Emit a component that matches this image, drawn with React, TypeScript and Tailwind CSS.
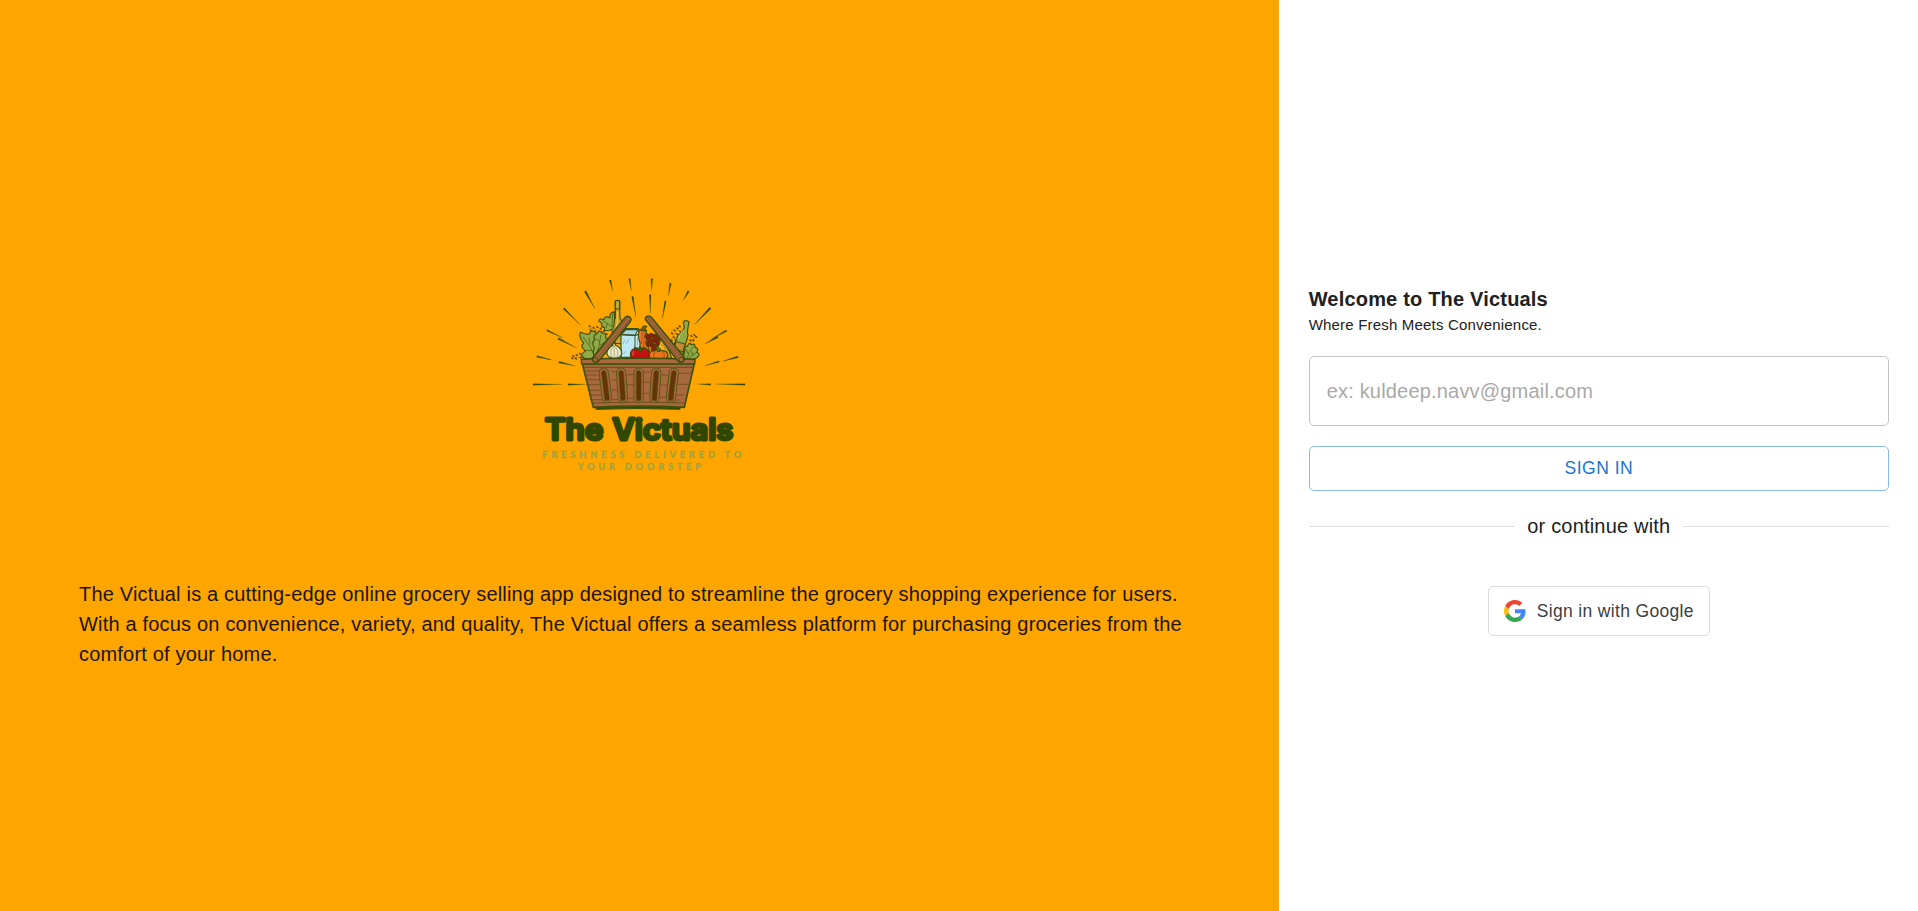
const rays = [
  'M268 45 L273 45 L278 77Z', 'M326 41 L331 41 L334 76Z', 'M393 41 L398 41 L395 76Z',
  'M449 54 L454 56 L445 92Z', 'M503 77 L508 80 L490 106Z', 'M193 80 L198 77 L225 131Z',
  'M335 95 L340 94 L348 157Z', 'M388 89 L393 89 L391 145Z', 'M434 108 L439 109 L427 161Z',
  'M129 131 L133 128 L181 180Z', 'M569 127 L573 131 L523 179Z',
  'M80 198 L82 194 L129 219Z', 'M113 223 L116 218 L170 249Z',
  'M618 195 L621 199 L574 222Z', 'M592 213 L595 218 L554 237Z',
  'M50 277 L51 272 L98 285Z', 'M116 294 L118 289 L166 303Z',
  'M653 273 L655 278 L608 289Z', 'M597 287 L598 292 L555 302Z',
  'M39 356 L126 358 L39 361Z', 'M195 358 L144 356 L144 361Z',
  'M533 357 L572 356 L572 361Z', 'M588 357 L675 356 L675 361Z',
];

const slots = [
  { x: 256, tilt: -7 }, { x: 306, tilt: -4 }, { x: 356, tilt: 0 }, { x: 406, tilt: 4 }, { x: 457, tilt: 7 },
];

const planks = [
  'M190 318H240', 'M193 330H232', 'M197 344H240', 'M198 359H240', 'M204 376H242', 'M207 390H246', 'M210 404H248',
  'M276 320H290', 'M276 345H294', 'M277 375H296', 'M278 404H298', 'M322 329H342', 'M322 359H342', 'M322 400H342',
  'M370 321H390', 'M370 352H389', 'M370 385H388', 'M420 330H444', 'M420 360H440', 'M420 397H438',
  'M474 325H510', 'M474 358H505', 'M470 390H490', 'M468 405H480',
];

const seeds = [
  [209, 184], [221, 188], [232, 186], [242, 191], [251, 199], [212, 196], [225, 199], [238, 204], [250, 210], [260, 207],
  [160, 273], [170, 270], [168, 281], [180, 266], [182, 278], [157, 280],
  [456, 205], [463, 196], [472, 190], [479, 184], [462, 217], [471, 207], [480, 199], [455, 226], [467, 225],
  [514, 213], [523, 210], [529, 216], [511, 226], [520, 226], [509, 236],
];

const grapes = [
  [382, 214], [394, 212], [407, 214], [416, 220], [389, 226], [402, 227], [413, 233], [395, 240], [407, 244], [385, 238], [400, 254],
];

function Logo() {
  return (
    <svg className="ml-[2px] block h-[220px] w-[240px]" viewBox="0 0 720 660" role="img" aria-label="The Victuals">
      <g fill="#2f4a05" stroke="#2f4a05" strokeWidth="0.6">{rays.map((d) => <path key={d} d={d} />)}</g>
      <g strokeLinejoin="round" strokeLinecap="round" stroke="#3c500b" strokeWidth="3.5">
        <g fill="#604a08" stroke="none">
          {seeds.map(([x, y]) => <ellipse key={`${x}-${y}`} cx={x} cy={y} rx="4" ry="2.5" transform={`rotate(30 ${x} ${y})`} />)}
        </g>
        <path fill="none" strokeWidth="1" d="M210 190 Q240 190 264 218 M158 278 L188 276 M452 234 Q457 207 480 185 M508 240 L528 210" />
        <path fill="#d2a226" d="M286 132 L286 109 Q292 104 299 109 L299 132 L300 159 Q314 180 309 207 L304 236 L286 235 L276 200 Q273 180 286 159Z" />
        <path fill="#b9ab38" d="M286 108 Q292 104 299 108 L299 132 L286 132Z" />
        <path fill="none" stroke="#ead06d" strokeWidth="3" d="M292 141 V170 Q286 190 292 214" />
        <path fill="#91aa48" d="M283 140 Q267 145 270 158 Q253 151 252 164 Q237 158 237 169 Q249 175 245 186 Q257 184 253 197 Q269 198 278 192 Q286 176 283 140Z" />
        <path fill="none" strokeWidth="2" d="M249 167 L276 185 L278 148 M262 177 L258 188" />
        <path fill="#91aa48" d="M217 279 Q186 286 184 268 L197 257 Q178 246 191 234 Q175 217 181 202 Q198 209 207 208 Q212 193 227 201 Q232 213 235 225 L232 278Z" />
        <path fill="#91aa48" d="M232 205 Q238 192 247 205 Q259 203 257 218 Q272 228 261 242 Q263 259 244 267 L226 278 Q216 265 223 249 Q213 230 224 225 Q217 209 232 205Z" />
        <path fill="none" strokeWidth="2" d="M189 216 Q211 240 225 275 M198 256 L216 257 M207 219 L211 238 M242 211 Q240 241 231 262 M227 221 L238 229 M256 231 L240 240" />
        <path fill="#bfe7f3" d="M303 209 L316 191 L355 191 L362 205 L361 277 L303 277Z" />
        <path fill="#a5d7e8" d="M303 209 L318 194 L351 194 L362 207 L344 211Z" />
        <path fill="none" strokeWidth="3" d="M316 191 H355 M304 209 L345 211 L353 195 M345 211 V277" />
        <path fill="none" stroke="#799c9d" strokeWidth="2" d="M314 226 L309 236 M327 222 L320 235 M316 260 L311 267 M353 218 V239 M353 254 V272" />
        <path fill="#e9792a" d="M359 194 Q371 190 378 200 Q386 217 377 232 Q392 249 388 280 L361 280 L360 233 Q351 209 359 194Z" />
        <path fill="none" stroke="#963d0a" strokeWidth="2" d="M366 197 Q369 216 364 236 M373 201 Q374 220 370 248" />
        <path fill="#b64f16" d="M363 196 L370 183 L380 184 L374 192 L380 197Z" />
        <g fill="#8b210e" stroke="#5d3208" strokeWidth="3">{grapes.map(([x, y]) => <circle key={`${x}-${y}`} cx={x} cy={y} r="7" />)}</g>
        <path fill="#f2ad29" d="M409 251 Q423 235 419 222 Q441 234 455 279 L416 279Z" />
        <path fill="none" stroke="#8e6709" strokeWidth="2" d="M425 237 Q443 254 448 280 M420 249 L432 277" />
        <path fill="#ebe7c7" d="M281 229 L287 241 Q307 250 305 267 Q300 282 280 280 Q258 276 261 259 Q264 247 279 241 L276 228Z" />
        <path fill="none" stroke="#918e66" strokeWidth="2" d="M281 243 Q265 259 276 277 M285 245 Q300 259 291 276 M282 244 L283 276" />
        <path fill="#c31211" d="M332 278 Q327 246 357 251 Q387 243 390 270 L387 281 L337 281Z" />
        <path fill="#35590c" strokeWidth="2" d="M344 247 L357 250 L359 243 L364 250 L376 247 L364 255 L360 262 L355 254Z" />
        <path fill="none" stroke="#e55335" strokeWidth="4" d="M341 260 L338 270" />
        <path fill="#e9761e" d="M389 279 Q383 258 402 258 Q414 249 425 257 Q445 257 443 273 L439 282 L394 281Z" />
        <path fill="none" stroke="#8c450a" strokeWidth="2" d="M405 260 Q396 272 402 280 M431 260 Q436 270 431 280" />
        <path fill="#68852a" strokeWidth="3" d="M412 259 Q415 249 408 247 L413 244 Q420 250 420 258Z" />
        <path fill="#91aa48" d="M493 187 L490 171 L497 166 L507 170 L504 188 Q501 202 504 211 Q500 229 494 244 L488 270 L457 253 L470 220 Q474 207 487 201Z" />
        <path fill="#c78933" strokeWidth="3" d="M469 230 L495 237 L489 261 L465 250Z" />
        <path fill="none" stroke="#ccd389" strokeWidth="3" d="M491 196 Q477 210 476 220" />
        <path fill="#91aa48" d="M490 280 L495 252 Q491 243 502 244 Q506 231 515 239 Q526 234 525 247 Q539 250 530 261 Q544 269 530 279 L515 284Z" />
        <path fill="none" strokeWidth="2" d="M501 280 Q504 265 519 245 M504 265 L499 254 M507 278 L529 263 M517 271 V261" />

        <path fill="#a8693f" strokeWidth="5" d="M187 296 H523 L493 427 Q356 419 220 427Z" />
        <path fill="#304706" strokeWidth="3" d="M229 428 Q354 422 480 428 V433 Q353 428 229 433Z" />
        <g fill="none" stroke="#654614" strokeWidth="2">{planks.map((d) => <path key={d} d={d} />)}</g>
        <path fill="none" stroke="#654614" strokeWidth="2.5" d="M192 307 H518 M219 414 Q356 408 493 414" />
        {slots.map(({ x, tilt }) => (
          <g key={x} transform={`rotate(${tilt} ${x} 361)`}>
            <rect x={x - 14} y="309" width="28" height="104" rx="14" fill="#a8693f" stroke="#59570f" strokeWidth="3" />
            <rect x={x - 7} y="317" width="14" height="90" rx="6" fill="#643408" stroke="#544909" strokeWidth="2" />
          </g>
        ))}
        <path fill="#a8693f" strokeWidth="4.5" d="M184 283 Q354 277 525 283 L524 297 H185Z" />
        <path fill="#a8693f" strokeWidth="4.5" d="M218 278 L314 159 Q320 151 329 156 Q336 162 330 171 L238 286 Q230 296 220 289 Q216 284 218 278Z" />
        <path fill="#a8693f" strokeWidth="4.5" d="M377 164 Q374 157 381 154 Q388 151 395 158 L491 275 Q496 283 489 290 Q480 296 472 286Z" />
        <path fill="none" stroke="#684519" strokeWidth="2" d="M227 272 L321 160 M234 277 L326 167 M384 159 L482 275 M380 165 L476 279" />
        <circle cx="226" cy="284" r="7" fill="#a8693f" strokeWidth="3" />
        <circle cx="484" cy="284" r="7" fill="#a8693f" strokeWidth="3" />
      </g>
      <g fill="#304700" stroke="#304700" strokeWidth="9" strokeLinejoin="round" fontSize="88" className="font-['Inter'] font-semibold">
        <text x="74" y="524" textLength="176" lengthAdjust="spacingAndGlyphs">The</text>
        <text x="277" y="524" textLength="363" lengthAdjust="spacingAndGlyphs">Victuals</text>
      </g>
      <g fill="#9ca342" stroke="#9ca342" strokeWidth="0.8" fontSize="28" className="font-['Lato'] font-bold">
        <text x="67" y="578" textLength="597">FRESHNESS DELIVERED TO</text>
        <text x="173" y="615" textLength="370">YOUR DOORSTEP</text>
      </g>
    </svg>
  );
}

function GoogleMark() {
  return (
    <svg className="mr-[11px] size-[22px]" viewBox="0 0 48 48" aria-hidden="true">
      <path fill="#EA4335" d="M24 9.5c3.54 0 6.71 1.22 9.21 3.6l6.85-6.85C35.9 2.38 30.47 0 24 0 14.62 0 6.51 5.38 2.56 13.22l7.98 6.19C12.43 13.72 17.74 9.5 24 9.5z" />
      <path fill="#4285F4" d="M46.98 24.55c0-1.57-.15-3.09-.38-4.55H24v9.02h12.94c-.58 2.96-2.26 5.48-4.78 7.18l7.73 6c4.51-4.18 7.09-10.36 7.09-17.65z" />
      <path fill="#FBBC05" d="M10.53 28.59c-.48-1.45-.76-2.99-.76-4.59s.27-3.14.76-4.59l-7.98-6.19C.92 16.46 0 20.12 0 24c0 3.88.92 7.54 2.56 10.78l7.97-6.19z" />
      <path fill="#34A853" d="M24 48c6.48 0 11.93-2.13 15.89-5.81l-7.73-6c-2.15 1.45-4.92 2.3-8.16 2.3-6.26 0-11.57-4.22-13.47-9.91l-7.98 6.19C6.51 42.62 14.62 48 24 48z" />
    </svg>
  );
}

export default function App() {
  return (
    <main className="flex h-[911px] w-full bg-white font-['Liberation_Sans',Arial,sans-serif] text-[#212121]">
      <section className="flex w-2/3 flex-col items-center bg-[#ffa500] px-[79px] pt-[265px]">
        <Logo />
        <p className="mt-[94px] w-full text-[20px] leading-[30px] tracking-[0.188px] text-[#211502]">
          The Victual is a cutting-edge online grocery selling app designed to streamline the grocery shopping
          experience for users. With a focus on convenience, variety, and quality, The Victual offers a seamless
          platform for purchasing groceries from the comfort of your home.
        </p>
      </section>
      <section className="flex w-1/3 flex-col pt-[283px] pr-[29px] pl-[30px]">
        <h1 className="text-[20px] leading-8 font-bold tracking-[0.19px]">Welcome to The Victuals</h1>
        <p className="text-[15px] leading-5 tracking-[0.19px]">Where Fresh Meets Convenience.</p>
        <input
          aria-label="Email"
          placeholder="ex: kuldeep.navv@gmail.com"
          className="mt-[21px] h-[70px] w-full rounded-[5px] border border-[#c4c4c4] px-[17px] text-[20px] tracking-[0.19px] outline-none placeholder:text-[#a9a9a9]"
        />
        <button className="mt-5 h-[45px] w-full rounded-[5px] border border-[#8cbae8] text-[17.5px] tracking-[0.5px] text-[#1976d2]">SIGN IN</button>
        <div className="mt-5 flex items-center text-[20px] leading-[30px] tracking-[0.19px]">
          <span className="h-px flex-1 bg-[#e0e0e0]" />
          <span className="px-[12.5px]">or continue with</span>
          <span className="h-px flex-1 bg-[#e0e0e0]" />
        </div>
        <button className="mt-[45px] flex h-[50px] w-[222px] items-center self-center rounded-[5px] border border-[#dadce0] pl-[15px] text-[17.5px] tracking-[0.33px] text-[#3c4043]">
          <GoogleMark />
          <span className="whitespace-nowrap">Sign in with Google</span>
        </button>
      </section>
    </main>
  );
}
